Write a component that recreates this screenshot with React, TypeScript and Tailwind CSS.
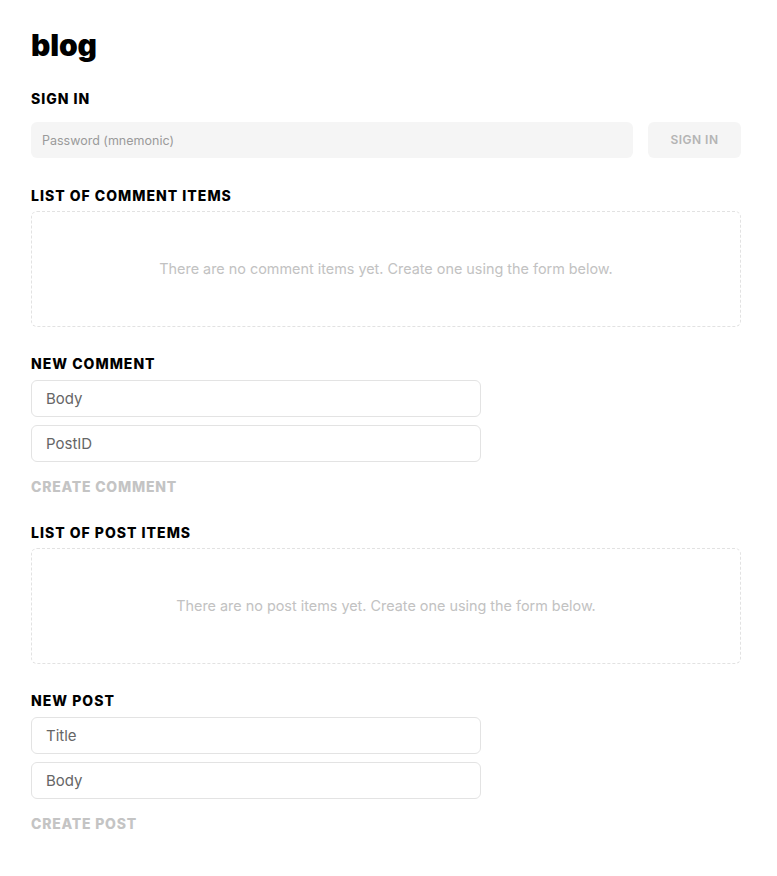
import React from 'react';

function Heading({ children }: { children: React.ReactNode }) {
  return <h2 className="text-[14px] leading-5 font-extrabold tracking-[0.072em] text-black uppercase">{children}</h2>;
}

function EmptyList({ what }: { what: string }) {
  return (
    <div className="mt-[5px] h-[116px] rounded-md border border-dashed border-[#e2e2e2] flex items-center justify-center">
      <p className="text-[14.4px] text-[#c2c2c2]">There are no {what} items yet. Create one using the form below.</p>
    </div>
  );
}

function Field({ placeholder }: { placeholder: string }) {
  return (
    <input
      placeholder={placeholder}
      className="w-[450px] h-[37px] rounded-md border border-[#e3e3e3] px-[14px] text-[15px] text-[#555] placeholder:text-[#666] outline-none"
    />
  );
}

function NewForm({ title, fields, button }: { title: string; fields: string[]; button: string }) {
  return (
    <section>
      <Heading>{title}</Heading>
      <div className="mt-[6px] flex flex-col gap-[8px]">
        {fields.map((f) => (
          <Field key={f} placeholder={f} />
        ))}
      </div>
      <button className="mt-[15px] text-[14px] leading-5 font-extrabold tracking-[0.055em] text-[#c4c4c4] uppercase">{button}</button>
    </section>
  );
}

export default function App() {
  return (
    <div className="min-h-[876px] bg-white px-[31px] pt-[27px] pb-10 font-['Inter','Noto_Sans',sans-serif] text-black">
      <div className="w-[710px]">
        <h1 className="text-[30px] leading-9 font-black tracking-[-0.005em]">blog</h1>

        <section className="mt-[26px]">
          <Heading>Sign in</Heading>
          <div className="mt-[13px] flex gap-[15px]">
            <input
              placeholder="Password (mnemonic)"
              className="flex-1 h-[36px] rounded-md bg-[#f5f5f5] px-[11px] text-[12.5px] text-[#555] placeholder:text-[#9a9a9a] outline-none"
            />
            <button className="w-[93px] h-[36px] rounded-md bg-[#f5f5f5] text-[12px] font-semibold tracking-[0.04em] text-[#b4b4b4]">SIGN IN</button>
          </div>
        </section>

        <section className="mt-[28px]">
          <Heading>List of comment items</Heading>
          <EmptyList what="comment" />
        </section>

        <div className="mt-[27px]">
          <NewForm title="New comment" fields={['Body', 'PostID']} button="Create comment" />
        </div>

        <section className="mt-[25px]">
          <Heading>List of post items</Heading>
          <EmptyList what="post" />
        </section>

        <div className="mt-[27px]">
          <NewForm title="New post" fields={['Title', 'Body']} button="Create post" />
        </div>
      </div>
    </div>
  );
}
